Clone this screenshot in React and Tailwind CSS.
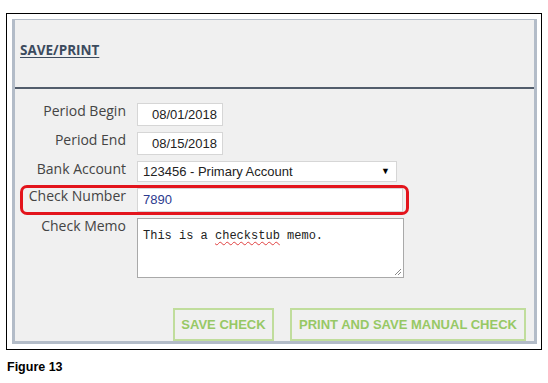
import React from 'react';

const labelCls =
  "w-[111px] shrink-0 text-right leading-[16px] text-[14px] text-[#444]";

const Row = ({ label, children }) => (
  <div className="flex items-start gap-[11px]">
    <div className={labelCls} style={{ fontFamily: '"Open Sans", sans-serif' }}>
      {label}
    </div>
    {children}
  </div>
);

const App = () => {
  return (
    <div className="w-[548px] h-[383px] bg-white pt-[13px] pl-[6px]">
      <div className="w-[536px] h-[337px] border border-black pt-[5px] pl-[5px]">
        <div className="w-[525px] h-[325px] bg-[#f0f0f0] border-t border-x-[3px] border-b-[3px] border-[#b3bcc8] flex flex-col">
          <div className="h-[67px] pl-[5px] pt-[17px]">
            <span
              className="text-[13.5px] font-bold underline underline-offset-2 text-[#3c4b5e]"
              style={{ fontFamily: '"Open Sans", sans-serif' }}
            >
              SAVE/PRINT
            </span>
          </div>
          <div className="h-[2px] bg-[#525d6c]" />

          <div
            className="flex flex-col gap-[6px] pt-[14px]"
            style={{ fontFamily: '"Liberation Sans", Arial, sans-serif' }}
          >
            <Row label="Period Begin">
              <div className="w-[86px] h-[23px] bg-white border border-[#d6d6d6] text-right pr-[5px] leading-[21px] text-[13px] text-[#222]">
                08/01/2018
              </div>
            </Row>
            <Row label="Period End">
              <div className="w-[86px] h-[23px] bg-white border border-[#d6d6d6] text-right pr-[5px] leading-[21px] text-[13px] text-[#222]">
                08/15/2018
              </div>
            </Row>
            <Row label="Bank Account">
              <div className="w-[260px] h-[21px] bg-white border border-[#d6d6d6] flex items-center justify-between pl-[5px] pr-[6px] text-[13px] text-[#222]">
                <span>123456 - Primary Account</span>
                <span className="text-[9px] text-black">▼</span>
              </div>
            </Row>
            <div className="relative">
              <Row label="Check Number">
                <div className="w-[266px] h-[24px] bg-white border border-[#d6d6d6] pl-[5px] leading-[22px] text-[13px] text-[#2c3a8e]">
                  7890
                </div>
              </Row>
              <div className="absolute left-[5px] top-[-3px] w-[389px] h-[30px] border-[3px] border-[#e3141c] rounded-[7px]" />
            </div>
            <Row label="Check Memo">
              <div className="relative w-[267px] h-[60px] bg-white border border-[#a9a9a9] pl-[5px] pt-[3px]">
                <span
                  className="text-[12px] text-[#222] leading-[16px]"
                  style={{ fontFamily: '"Liberation Mono", "Courier New", monospace' }}
                >
                  This is a{' '}
                  <span className="underline decoration-wavy decoration-[#e04040] decoration-1 underline-offset-2">
                    checkstub
                  </span>{' '}
                  memo.
                </span>
                <svg className="absolute right-[1px] bottom-[1px]" width="9" height="9" viewBox="0 0 9 9">
                  <path d="M8 2 L2 8 M8 5 L5 8" stroke="#888" strokeWidth="1" />
                </svg>
              </div>
            </Row>
          </div>

          <div
            className="flex justify-end gap-[16px] pr-[8px] mt-[30px]"
            style={{ fontFamily: '"Liberation Sans", Arial, sans-serif' }}
          >
            <div className="w-[101px] h-[33px] border-2 border-[#c0dd9c] flex items-center justify-center whitespace-nowrap text-[13px] font-bold text-[#97c865]">
              SAVE CHECK
            </div>
            <div className="w-[236px] h-[33px] border-2 border-[#c0dd9c] flex items-center justify-center whitespace-nowrap text-[13px] font-bold text-[#97c865]">
              PRINT AND SAVE MANUAL CHECK
            </div>
          </div>
        </div>
      </div>
      <div
        className="pl-[1px] mt-[8px] text-[12.5px] font-bold text-black"
        style={{ fontFamily: '"Liberation Sans", Arial, sans-serif' }}
      >
        Figure 13
      </div>
    </div>
  );
};

export default App;
